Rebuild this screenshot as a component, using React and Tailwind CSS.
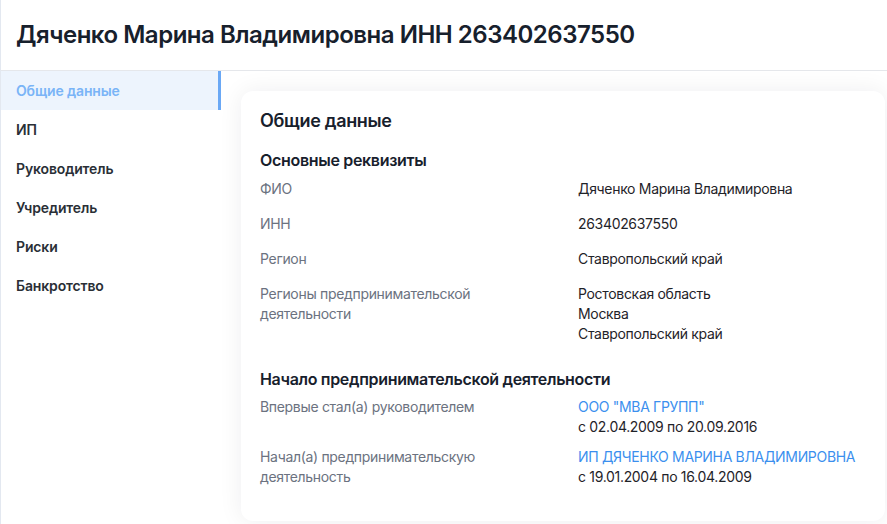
import React from "react";

const menu = ["Общие данные", "ИП", "Руководитель", "Учредитель", "Риски", "Банкротство"];

const Row = ({ label, children }) => (
    <div className="flex">
        <div className="w-[318px] shrink-0 pr-4 text-[14px] leading-5 text-[#6b7280]">{label}</div>
        <div className="text-[14px] leading-5 text-[#1f2329]">{children}</div>
    </div>
);

export default function App() {
    return (
        <div
            className="w-[887px] h-[524px] overflow-hidden bg-white border-l border-[#e3e8f0] flex flex-col"
            style={{ fontFamily: "Inter, 'Noto Sans', sans-serif" }}
        >
            {/* Header */}
            <div className="h-[71px] shrink-0 border-b border-[#e5e7eb] flex items-center px-[15px]">
                <h1 className="text-[24px] font-semibold text-[#17202c] tracking-[-0.02em]">
                    Дяченко Марина Владимировна ИНН 263402637550
                </h1>
            </div>

            <div className="flex flex-1 min-h-0">
                {/* Sidebar */}
                <div className="w-[220px] shrink-0 flex flex-col">
                    {menu.map((item, i) => (
                        <div
                            key={item}
                            className={
                                i === 0
                                    ? "h-[39px] flex items-center px-[15px] bg-[#edf4fd] border-r-[3px] border-[#6aa8f5] text-[14px] font-semibold text-[#7ab4f7] tracking-[-0.01em]"
                                    : "h-[39px] flex items-center px-[15px] text-[14px] font-semibold text-[#2a2f36] tracking-[-0.01em]"
                            }
                        >
                            {item}
                        </div>
                    ))}
                </div>

                {/* Content */}
                <div className="flex-1 pl-5 pt-5 pr-[2px] pb-[3px]">
                    <div className="h-full rounded-xl bg-white shadow-[0_0_24px_rgba(15,23,42,0.07)] px-[19px] pt-[18px] tracking-[-0.02em]">
                        <h2 className="text-[18px] leading-6 font-semibold text-[#17202c]">Общие данные</h2>

                        <h3 className="mt-[15px] text-[16px] leading-6 font-semibold text-[#17202c]">Основные реквизиты</h3>
                        <div className="mt-[7px] flex flex-col gap-[15px]">
                            <Row label="ФИО">Дяченко Марина Владимировна</Row>
                            <Row label="ИНН">263402637550</Row>
                            <Row label="Регион">Ставропольский край</Row>
                            <Row label={<>Регионы предпринимательской<br />деятельности</>}>
                                <div>Ростовская область</div>
                                <div>Москва</div>
                                <div>Ставропольский край</div>
                            </Row>
                        </div>

                        <h3 className="mt-[23px] text-[16px] leading-6 font-semibold text-[#17202c]">
                            Начало предпринимательской деятельности
                        </h3>
                        <div className="mt-[6px] flex flex-col gap-[10px]">
                            <Row label="Впервые стал(а) руководителем">
                                <div className="text-[#3b8fee]">ООО "МВА ГРУПП"</div>
                                <div>с 02.04.2009 по 20.09.2016</div>
                            </Row>
                            <Row label={<>Начал(а) предпринимательскую<br />деятельность</>}>
                                <div className="text-[#3b8fee]">ИП ДЯЧЕНКО МАРИНА ВЛАДИМИРОВНА</div>
                                <div>с 19.01.2004 по 16.04.2009</div>
                            </Row>
                        </div>
                    </div>
                </div>
            </div>
        </div>
    );
}
